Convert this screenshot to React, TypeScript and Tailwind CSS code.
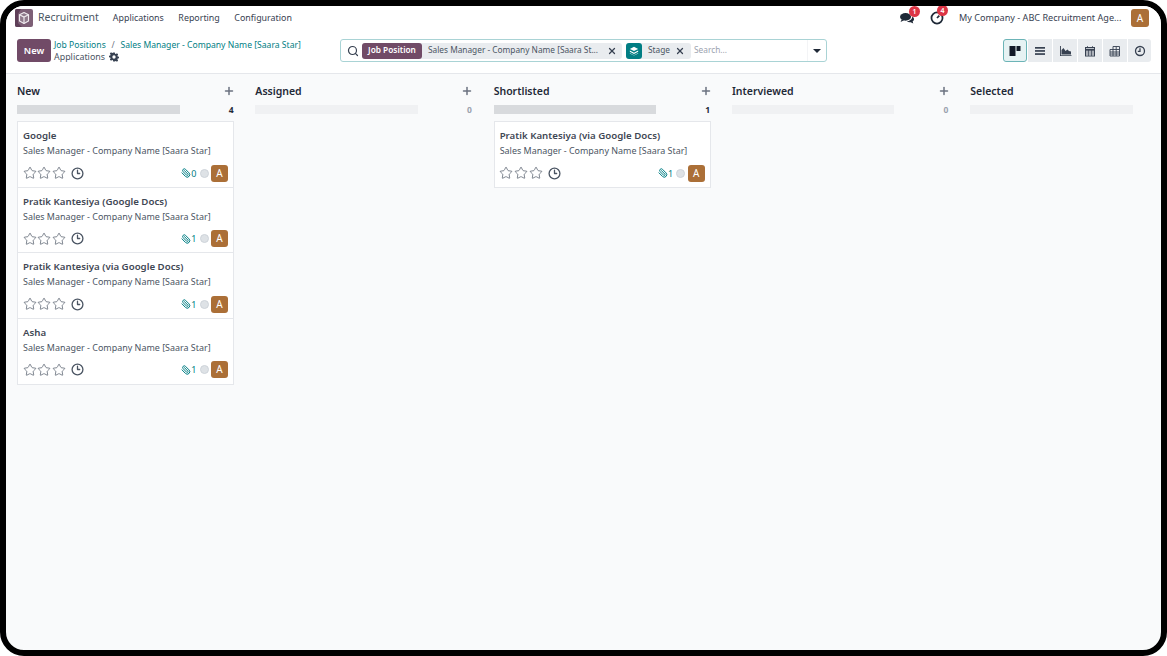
import React from 'react';
import { Search, X, Plus, Star, Clock3, Paperclip } from 'lucide-react';

const font = "font-['Noto_Sans','Open_Sans',sans-serif]";

const GearIcon = () => <svg width="10" height="10" viewBox="0 0 24 24" fill="#374151">
    <path d="M10 1h4l.6 3.200 1.900.8 2.700-1.800 2.800 2.800-1.800 2.700.8 1.900 3.200.6v4l-3.200.6-.8 1.900 1.800 2.700-2.800 2.800-2.700-1.800-1.900.8L14 23h-4l-.6-3.200-1.900-.8-2.700 1.800L2 18l1.800-2.700-.8-1.900L-.2 12.800v-4l3.200-.6.8-1.900L2 3.600 4.800.8l2.700 1.800 1.900-.8zM12 8a4 4 0 1 0 0 8 4 4 0 0 0 0-8z" fillRule="evenodd" />
  </svg>;

const AppLogo = () => <div className="w-[18px] h-[18px] rounded-[2px] bg-[#7d5f76] flex items-center justify-center overflow-hidden">
    <svg width="18" height="18" viewBox="0 0 18 18" fill="none">
      <path d="M0 0h6L3 5v9l4 4H0z" fill="#5f3f58" />
      <path d="M9 3.500l4.500 2.200v6.300L9 14.500l-4.500-2.500V5.700z" fill="#8f7a8b" stroke="#efeaee" strokeWidth="1.200" strokeLinejoin="round" />
      <path d="M4.500 5.700L9 8l4.500-2.300M9 8v6.500" stroke="#efeaee" strokeWidth="1.200" />
    </svg>
  </div>;

const ChatIcon = () => <svg width="14" height="12" viewBox="0 0 24 20" fill="#1f2937">
    <ellipse cx="9.500" cy="8" rx="9.500" ry="6.500" />
    <path d="M3 12l-2 5 6-3z" />
    <path d="M21 7.500c2 1.300 3 3 3 4.600 0 1.600-1 3-2.400 4l1.200 3.400-4.600-2.300c-2.500.4-5-.2-6.800-1.600 4.500 0 9.800-2.800 9.600-8.100z" />
  </svg>;

const ActivityIcon = () => <svg width="14" height="14" viewBox="0 0 24 24" fill="none" stroke="#1f2937" strokeWidth="3">
    <circle cx="12" cy="12" r="9.500" />
    <path d="M12 12l4-4" />
  </svg>;

const Badge = ({ n, pos }: { n: number; pos: string }) => <span className={`absolute ${pos} w-[11px] h-[11px] rounded-full bg-[#dc3545] text-white text-[7px] font-semibold leading-[11px] text-center`}>
    {n}
  </span>;

const Avatar = ({ size }: { size: string }) => <div className={`${size} rounded-[3px] bg-[#ab6f37] text-white flex items-center justify-center text-[10px]`}>
    A
  </div>;

const KanbanViewIcon = () => <svg width="12" height="12" viewBox="0 0 12 12" fill="#111827">
    <rect x="0.500" y="1" width="6" height="10" />
    <rect x="7.500" y="1" width="4" height="5" />
  </svg>;
const ListViewIcon = () => <svg width="12" height="12" viewBox="0 0 12 12" fill="#374151">
    <rect x="1" y="2" width="10" height="1.700" />
    <rect x="1" y="5.100" width="10" height="1.700" />
    <rect x="1" y="8.200" width="10" height="1.700" />
  </svg>;
const GraphViewIcon = () => <svg width="13" height="12" viewBox="0 0 13 12" fill="#374151">
    <path d="M1 1h.9v9.200H12.500V11H1z" />
    <path d="M2.500 9.500V5l2-2 2 3 2-1.500 1.500 1.500 2 .5v3z" />
  </svg>;
const CalendarViewIcon = () => <svg width="12" height="12" viewBox="0 0 12 12" fill="none" stroke="#374151" strokeWidth="1">
    <rect x="1.500" y="2.500" width="9" height="8.500" />
    <path d="M1.500 4.700h9" strokeWidth="2" />
    <path d="M3.500 1v2M8.500 1v2M1.500 7h9M1.500 9h9M4.500 5v6M7.500 5v6" strokeWidth="0.700" />
  </svg>;
const PivotViewIcon = () => <svg width="12" height="12" viewBox="0 0 12 12" fill="none" stroke="#374151" strokeWidth="0.900">
    <path d="M4 1.500h6.500v9.500H1V4.500h9.500M1 7h9.500M1 9h9.500M4 1.500V11M7.200 1.500V11" />
  </svg>;
const ActivityViewIcon = () => <svg width="12" height="12" viewBox="0 0 12 12" fill="none" stroke="#374151" strokeWidth="1.300">
    <circle cx="6" cy="6" r="4.500" />
    <path d="M6 3.200V6.300H3.800" />
  </svg>;

const cards = (name: string, count: number) => ({ name, count });
const columns = [{
  title: 'New',
  total: 4,
  items: [cards('Google', 0), cards('Pratik Kantesiya (Google Docs)', 1), cards('Pratik Kantesiya (via Google Docs)', 1), cards('Asha', 1)]
}, {
  title: 'Assigned',
  total: 0,
  items: []
}, {
  title: 'Shortlisted',
  total: 1,
  items: [cards('Pratik Kantesiya (via Google Docs)', 1)]
}, {
  title: 'Interviewed',
  total: 0,
  items: []
}, {
  title: 'Selected',
  total: null,
  items: []
}];

const Card = ({ name, count }: { name: string; count: number }) => <div className="h-[65.67px] pl-[5px] pr-[5px] pt-[6px] bg-white border-x border-b border-[#e5e7eb]">
    <div className="text-[9.700px] leading-[16px] font-semibold text-[#3f4754] whitespace-nowrap">{name}</div>
    <div className="text-[8.950px] leading-[14px] text-[#4b5563] whitespace-nowrap">Sales Manager - Company Name [Saara Star]</div>
    <div className="flex items-center mt-[6px] h-[18px]">
      <div className="flex gap-[0.700px] -ml-[0.500px]">
        <Star size={14} strokeWidth={1.200} className="text-[#4b5563]" />
        <Star size={14} strokeWidth={1.200} className="text-[#4b5563]" />
        <Star size={14} strokeWidth={1.200} className="text-[#4b5563]" />
      </div>
      <Clock3 size={13} strokeWidth={2.400} className="ml-[5px] text-[#4b5563]" />
      <div className="ml-auto flex items-center">
        <Paperclip size={10} strokeWidth={2.400} className="text-[#017e84] -scale-x-100" />
        <span className="text-[9px] leading-none text-[#017e84]">{count}</span>
        <span className="ml-[3px] w-[9px] h-[9px] rounded-full bg-[#dee2e6] border border-[#ced4da]" />
        <Avatar size="ml-[2.500px] w-[17px] h-[17px]" />
      </div>
    </div>
  </div>;

export default function App() {
  return <div className={`w-[1167px] h-[656px] bg-white overflow-hidden ${font}`}>
      <div className="h-full border-[6px] border-black rounded-[24px] bg-[#f9fafb] flex flex-col overflow-hidden">
        {/* Top bar */}
        <header className="h-[24px] bg-white flex items-center pl-[9px] pr-[12px] shrink-0">
          <AppLogo />
          <span className="ml-[5px] text-[10.500px] text-[#4b5563]">Recruitment</span>
          <nav className="ml-[14px] flex gap-[14.500px] text-[8.900px] text-[#374151]">
            <span>Applications</span>
            <span>Reporting</span>
            <span>Configuration</span>
          </nav>
          <div className="ml-auto flex items-center">
            <div className="relative flex"><ChatIcon /><Badge n={1} pos="-top-[6px] -right-[6px]" /></div>
            <div className="relative flex ml-[16px]"><ActivityIcon /><Badge n={4} pos="-top-[6px] -right-[4px]" /></div>
            <span className="ml-[15px] w-[172px] text-[9.100px] text-[#374151] whitespace-nowrap">My Company - ABC Recruitment Age...</span>
            <Avatar size="w-[18px] h-[18px]" />
          </div>
        </header>

        {/* Control panel */}
        <div className="h-[44px] bg-white border-b border-[#e5e7eb] flex items-center pl-[11px] pr-[10px] pb-[2px] shrink-0">
          <button className="w-[34px] h-[23px] rounded-[3px] bg-[#714b67] text-white text-[9.300px] font-semibold">New</button>
          <div className="ml-[3px] w-[286px] leading-[12px]">
            <div className="text-[8.600px] text-[#017e84] whitespace-nowrap">
              Job Positions <span className="text-[#6b7280] mx-[3.500px]">/</span> Sales Manager - Company Name [Saara Star]
            </div>
            <div className="flex items-center gap-[4px] text-[8.900px] text-[#4b5563]">
              Applications <GearIcon />
            </div>
          </div>
          <div className="w-[487px] h-[23px] rounded-[3px] border border-[#a9d3d5] flex items-center pl-[5.500px] text-[8.300px]">
            <Search size={12} strokeWidth={2.400} className="text-[#374151]" />
            <div className="ml-[3.500px] h-[16px] flex rounded-[3px] bg-[#e9ecef] items-center">
              <span className="w-[60px] h-full rounded-[3px] bg-[#714b67] text-white font-semibold flex items-center justify-center">Job Position</span>
              <span className="ml-[6px] text-[#4b5563] w-[171px] whitespace-nowrap">Sales Manager - Company Name [Saara St...</span>
              <X size={10} strokeWidth={3} className="ml-[8px] mr-[5px] text-[#374151]" />
            </div>
            <div className="ml-[4px] h-[16px] flex rounded-[3px] bg-[#e9ecef] items-center">
              <span className="w-[16px] h-full rounded-[3px] bg-[#017e84] flex items-center justify-center">
                <svg width="10" height="10" viewBox="0 0 12 12" fill="white">
                  <path d="M6 1l5 2.500L6 6 1 3.500z" />
                  <path d="M1 5.500l5 2.500 5-2.500v1.500L6 9.500 1 7z" />
                  <path d="M1 8.500l5 2.500 5-2.500v.5L6 11.500 1 9z" />
                </svg>
              </span>
              <span className="ml-[6px] w-[22px] text-[#4b5563]">Stage</span>
              <X size={10} strokeWidth={3} className="ml-[5px] mr-[6px] text-[#374151]" />
            </div>
            <span className="ml-[3px] text-[#9ca3af]">Search...</span>
            <div className="ml-auto w-[19px] h-full border-l border-[#f3f4f6] flex items-center justify-center">
              <span className="w-0 h-0 border-x-[4px] border-x-transparent border-t-[4px] border-t-[#1f2937]" />
            </div>
          </div>
          <div className="ml-auto flex gap-[1px]">
            <div className="w-[24px] h-[23px] rounded-[3px] bg-[#e6f2f3] border border-[#6cb4b7] flex items-center justify-center"><KanbanViewIcon /></div>
            <div className="w-[24px] h-[23px] bg-[#e9ecef] flex items-center justify-center"><ListViewIcon /></div>
            <div className="w-[24px] h-[23px] bg-[#e9ecef] flex items-center justify-center"><GraphViewIcon /></div>
            <div className="w-[24px] h-[23px] bg-[#e9ecef] flex items-center justify-center"><CalendarViewIcon /></div>
            <div className="w-[24px] h-[23px] bg-[#e9ecef] flex items-center justify-center"><PivotViewIcon /></div>
            <div className="w-[23px] h-[23px] rounded-r-[3px] bg-[#e9ecef] flex items-center justify-center"><ActivityViewIcon /></div>
          </div>
        </div>

        {/* Kanban */}
        <main className="flex-1 flex gap-[21.330px] pl-[11px] overflow-hidden">
          {columns.map(col => <section key={col.title} className="w-[217px] shrink-0">
              <div className="h-[31px] pt-[9px] flex items-start justify-between">
                <span className="text-[10.500px] leading-[16px] font-semibold text-[#1f2937]">{col.title}</span>
                {col.total !== null && <Plus size={12} strokeWidth={3} className="mt-[2px] -mr-[1px] text-[#6b7280]" />}
              </div>
              <div className="h-[16px] flex items-start justify-between pr-[0.500px]">
                <div className={`w-[162.500px] h-[9px] ${col.total ? 'bg-[#d8dadd]' : 'bg-[#f0f1f3]'}`} />
                {col.total !== null && <span className={`text-[8.500px] leading-[10px] font-bold ${col.total ? 'text-[#1f2937]' : 'text-[#9ca3af]'}`}>{col.total}</span>}
              </div>
              {col.items.length > 0 && <div className="border-t border-[#e5e7eb]">
                  {col.items.map((item, i) => <Card key={i} name={item.name} count={item.count} />)}
                </div>}
            </section>)}
        </main>
      </div>
    </div>;
}
